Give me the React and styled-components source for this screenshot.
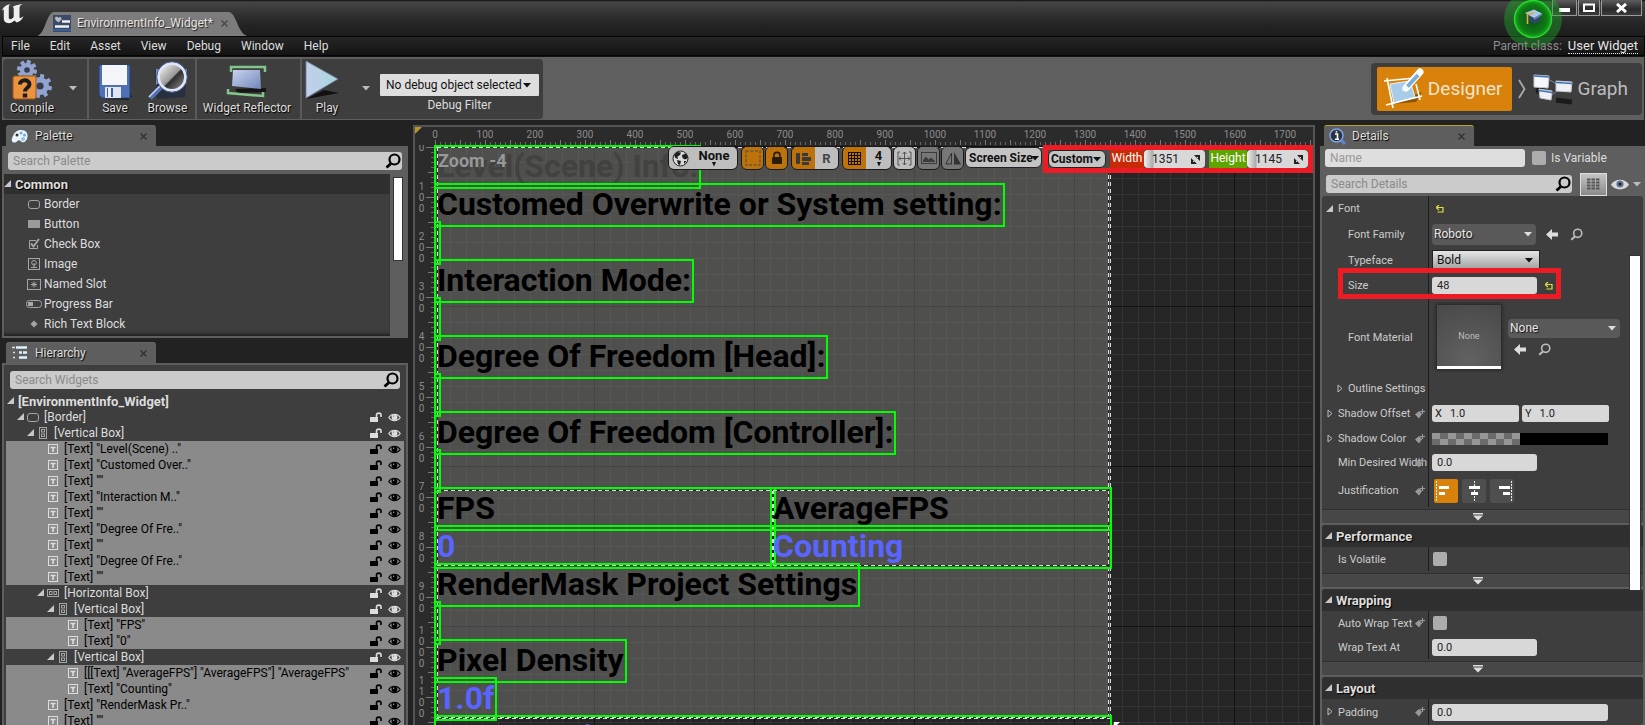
import React from "react";
import styled, { createGlobalStyle, css } from "styled-components";

const GlobalStyle = createGlobalStyle`
  * { box-sizing: border-box; }
  html, body { margin: 0; height: 100%; overflow: hidden; background: #222; }
  #root { height: 100%; }
  body, button, input, select {
    font-family: Roboto, "Liberation Sans", sans-serif;
    font-size: 12px;
    color: #ddd;
  }
  button { background: none; border: 0; padding: 0; }
  h2 { margin: 0; }
  ul { list-style: none; margin: 0; padding: 0; }
  svg { display: block; flex: none; }
`;

const RED = "#ed1c24";
const ORANGE = "#d9820b";
const GREEN = "#00ff00";

/* ---------- shell ---------- */

const Page = styled.div`
  height: 100vh;
  display: flex;
  flex-direction: column;
  overflow: hidden;
  background: #222;
`;

const TitleBar = styled.header`
  height: 36px;
  flex: none;
  display: flex;
  align-items: flex-end;
  background: linear-gradient(#0c0c0c 0, #454545 2px, #3a3a3a 9px, #262626 22px, #1c1c1c 100%);
`;

const LogoSlot = styled.div`
  width: 37px;
  height: 36px;
  padding: 3px 0 0 1px;
`;

const DocTab = styled.div`
  position: relative;
  display: flex;
  align-items: center;
  gap: 6px;
  width: 210px;
  height: 24px;
  padding: 0 0 2px 16px;
  color: #e4e4e4;
  text-shadow: 1px 1px 1px #222;
  z-index: 0;
`;

const DocTabShape = styled.svg`
  position: absolute;
  inset: 0;
  z-index: -1;
`;

const CloseButton = styled.button`
  display: flex;
  align-items: center;
  justify-content: center;
  width: 12px;
  height: 12px;
  margin-left: ${(p) => (p.$far ? "auto" : "0")};
`;

const WindowControls = styled.div`
  align-self: flex-start;
  display: flex;
  gap: 1px;
  margin: 0 3px 0 auto;
`;

const WindowButton = styled.button`
  display: flex;
  align-items: center;
  justify-content: center;
  width: ${(p) => p.$width}px;
  height: 16px;
  border: 1px solid #9a9a9a;
  border-top: 0;
  background: linear-gradient(#5d5d5d, #2b2b2b 60%, #3a3a3a);
`;

const TutorialBadge = styled.button`
  position: absolute;
  right: 82px;
  top: -10px;
  width: 60px;
  height: 60px;
`;

const MenuBar = styled.nav`
  height: 20px;
  flex: none;
  display: flex;
  align-items: center;
  margin-left: 2px;
  padding: 0 6px 0 8px;
  gap: 20px;
  border: 1px solid #050505;
  background: linear-gradient(#262626, #141414);
`;

const MenuItem = styled.button`
  line-height: 18px;
`;

const ParentClass = styled.div`
  margin-left: auto;
  color: #8d8d8d;
  display: flex;
  align-items: center;
  gap: 6px;
  z-index: 1;

  a {
    color: #e6e6e6;
    text-decoration: none;
    border-bottom: 1px dotted #e6e6e6;
    font-size: 13px;
    line-height: 14px;
  }
`;

const Toolbar = styled.div`
  height: 64px;
  flex: none;
  display: flex;
  justify-content: space-between;
  align-items: center;
  margin: 0 1px 5px 2px;
  padding: 2px 1px 2px 1px;
  border-top: 1px solid #111;
  background: #5f5f5f;
`;

const ToolGroup = styled.div`
  display: flex;
  height: 60px;
  background: #3e3e3e;
  border-radius: 4px;
`;

const ToolSection = styled.div`
  display: flex;
  align-items: stretch;
  padding: ${(p) => p.$pad || "0"};
  width: ${(p) => p.$width}px;
  border-right: ${(p) => (p.$last ? "0" : "2px solid #5a5a5a")};
`;

const ToolButton = styled.button`
  width: ${(p) => p.$width}px;
  display: flex;
  flex-direction: column;
  align-items: center;
  justify-content: flex-end;
  padding-bottom: 3px;
  text-shadow: 1px 1px 1px #000;
  line-height: 15px;
  white-space: nowrap;
`;

const ArrowButton = styled.button`
  display: flex;
  flex: 1;
  align-items: center;
  justify-content: center;
`;

const DebugFilter = styled.label`
  display: flex;
  flex-direction: column;
  align-items: center;
  gap: 2px;
  width: 159px;
  padding-top: 15px;
  line-height: 14px;
`;

const ModeSwitch = styled.div`
  display: flex;
  align-items: center;
  height: 52px;
  padding: 4px 14px 4px 6px;
  background: #3e3e3e;
  border-radius: 4px;
  margin-right: 1px;
`;

const ModeButton = styled.button`
  display: flex;
  align-items: center;
  gap: 4px;
  height: 44px;
  padding: ${(p) => (p.$active ? "0 9px 0 5px" : "0")};
  border-radius: 2px;
  font-size: 19px;
  color: ${(p) => (p.$active ? "#f1e3cd" : "#bdbdbd")};
  background: ${(p) => (p.$active ? ORANGE : "none")};
`;

const ModeArrow = styled.span`
  display: flex;
  justify-content: center;
  width: 20px;
`;

/* ---------- generic controls ---------- */

const SelectBox = styled.span`
  position: relative;
  display: block;
  width: ${(p) => (p.$width ? p.$width + "px" : "100%")};

  svg {
    position: absolute;
    right: ${(p) => p.$arrowRight || 8}px;
    top: 50%;
    margin-top: -2px;
    pointer-events: none;
  }
`;

const looks = {
  light: css`
    background: #dedede;
    color: #111;
    border-radius: 1px;
  `,
  flat: css`
    background: #595959;
    color: #e8e8e8;
    border-radius: 4px;
    text-shadow: 1px 1px 1px #111;
  `,
  raised: css`
    background: linear-gradient(#e6e6e6, #a2a2a2);
    color: #111;
    border: 1px solid #222;
  `,
  pill: css`
    background: #c4c4c4;
    color: #111;
    border: 1px solid #222;
    border-radius: 6px;
    font-weight: 700;
  `,
};

const Select = styled.select`
  appearance: none;
  display: block;
  width: 100%;
  height: ${(p) => p.$height}px;
  padding: 0 0 0 ${(p) => p.$pad}px;
  border: 0;
  outline: 0;
  ${(p) => looks[p.$look]}
`;

const SearchBox = styled.label`
  display: flex;
  align-items: center;
  flex: 1;
  height: 18px;
  padding: 0 1px 0 5px;
  background: #cbcbcb;
  border-radius: 3px;
`;

const SearchInput = styled.input`
  flex: 1;
  min-width: 0;
  border: 0;
  padding: 0;
  outline: 0;
  background: none;
  color: #111;

  &::placeholder { color: #8a8a8a; opacity: 1; }
`;

const Field = styled.input`
  width: ${(p) => p.$width}px;
  height: 17px;
  padding: 0 5px;
  border: 0;
  outline: 0;
  border-radius: 3px;
  background: #d8d8d8;
  color: #222;
  font-size: 11px;

  &::placeholder { color: #999; opacity: 1; }
`;

const Check = styled.input`
  appearance: none;
  width: 14px;
  height: 14px;
  margin: 0;
  border-radius: 2px;
  background: #adadad;
`;

/* ---------- dock ---------- */

const Workspace = styled.main`
  flex: 1;
  min-height: 0;
  display: flex;
  gap: 5px;
  padding-left: 2px;
`;

const LeftDock = styled.div`
  width: 406px;
  flex: none;
  display: flex;
  flex-direction: column;
  gap: 4px;
`;

const Panel = styled.section`
  display: flex;
  flex-direction: column;
  min-height: 0;
  min-width: 0;
  height: ${(p) => (p.$height ? p.$height + "px" : "auto")};
  flex: ${(p) => (p.$height ? "none" : 1)};
`;

const PanelTab = styled.div`
  display: flex;
  align-items: center;
  gap: 6px;
  flex: none;
  width: 150px;
  height: 21px;
  margin-left: 4px;
  padding: 0 7px 0 5px;
  background: #5e5e5e;
  border-top: 1px solid ${(p) => (p.$focused ? "#b5a52c" : "#666")};
  border-radius: 3px 3px 0 0;
  text-shadow: 1px 1px 1px #000;
`;

const PanelBody = styled.div`
  flex: 1;
  min-height: 0;
  display: flex;
  flex-direction: column;
  overflow: hidden;
  border: 2px solid #5e5e5e;
  background: ${(p) => (p.$dark ? "#3e3e3e" : "#5e5e5e")};
  border-bottom-width: ${(p) => (p.$open ? "0" : "2px")};
`;

const SearchRow = styled.div`
  display: flex;
  flex: none;
  padding: ${(p) => p.$pad};
`;

const PaletteScroll = styled.div`
  flex: 1;
  min-height: 0;
  display: flex;
`;

const PaletteList = styled.ul`
  flex: 1;
  background: #3e3e3e;
  box-shadow: inset 0 -4px 4px -3px #111;
`;

const PaletteHeader = styled.li`
  display: flex;
  align-items: center;
  gap: 4px;
  height: 20px;
  background: #2f2f2f;
  font-size: 13px;
  font-weight: 700;
  text-shadow: 1px 1px 1px #000;
`;

const PaletteItem = styled.li`
  display: flex;
  align-items: center;
  height: 20px;
  padding-left: 20px;
`;

const ScrollTrack = styled.div`
  width: 16px;
  padding: 3px 3px 0 3px;
`;

const ScrollThumb = styled.div`
  height: 84px;
  background: #fff;
  border: 1px solid #333;
`;

const IconSlot = styled.span`
  width: ${(p) => p.$width}px;
  display: flex;
  flex: none;
  align-items: center;
  justify-content: center;
`;

const Tree = styled.ul`
  flex: none;
  padding: 0 2px;
`;

const TreeRow = styled.li`
  display: flex;
  align-items: center;
  height: 16px;
  padding: 0 3px 0 ${(p) => 1 + p.$level * 10}px;
  white-space: nowrap;
  background: ${(p) => (p.$selected ? "#8a8a8a" : "none")};
  color: ${(p) => (p.$selected ? "#000" : "#ddd")};
  font-weight: ${(p) => (p.$level === 0 ? 700 : 400)};
  font-size: ${(p) => (p.$level === 0 ? 13 : 12)}px;
`;

const TreeLabel = styled.span`
  flex: 1;
  margin-left: ${(p) => (p.$root ? 4 : 2)}px;
`;

const TreeActions = styled.span`
  display: flex;
  gap: 6px;
`;

/* ---------- viewport ---------- */

const Viewport = styled.section`
  position: relative;
  flex: 1;
  min-width: 0;
  display: grid;
  grid-template: 18px 1fr / 19px 1fr;
  border: 2px solid #555;
  border-bottom: 0;
  background: #2b2b2b;
  overflow: hidden;
`;

const DockCorner = styled.svg`
  position: absolute;
  left: -2px;
  top: -2px;
`;

const TopRuler = styled.div`
  grid-column: 1 / -1;
  overflow: hidden;
  display: flex;
  padding-left: 20px;
  color: #8c8c8c;
  font-size: 10px;
  line-height: 15px;
  background:
    repeating-linear-gradient(90deg, #777 0 1px, transparent 1px 25px) 0 100% / 100% 5px no-repeat content-box,
    repeating-linear-gradient(90deg, #666 0 1px, transparent 1px 5px) 0 100% / 100% 3px no-repeat content-box;
`;

const TopMark = styled.span`
  flex: none;
  width: 50px;
  text-align: center;

  &:first-child { margin-left: -25px; }
`;

const LeftRuler = styled.div`
  overflow: hidden;
  color: #8c8c8c;
  font-size: 10px;
  line-height: 11px;
  background:
    repeating-linear-gradient(#777 0 1px, transparent 1px 50px) 100% 2px / 8px 100% no-repeat,
    repeating-linear-gradient(#777 0 1px, transparent 1px 25px) 100% 2px / 6px 100% no-repeat,
    repeating-linear-gradient(#666 0 1px, transparent 1px 5px) 100% 2px / 3px 100% no-repeat;
`;

const LeftMark = styled.span`
  display: flex;
  flex-direction: column;
  align-items: center;
  justify-content: center;
  width: 13px;
  height: 50px;

  &:first-child { margin-top: -23px; }
`;

const Canvas = styled.div`
  position: relative;
  overflow: hidden;
  background-color: #262626;
  background-image:
    linear-gradient(#121212 1px, transparent 1px),
    linear-gradient(90deg, #121212 1px, transparent 1px),
    linear-gradient(#343434 1px, transparent 1px),
    linear-gradient(90deg, #343434 1px, transparent 1px);
  background-size: 160px 160px, 160px 160px, 16px 16px, 16px 16px;
  background-position: 0 1px;
`;

const dash = "#ddd 0 4px, #222 4px 7px";
const dashedEdges = css`
  background-image:
    repeating-linear-gradient(90deg, ${dash}),
    repeating-linear-gradient(90deg, ${dash}),
    repeating-linear-gradient(${dash}),
    repeating-linear-gradient(${dash});
  background-size: 100% 1px, 100% 1px, 1px 100%, 1px 100%;
  background-position: 0 0, 0 100%, 0 0, 100% 0;
  background-repeat: no-repeat;
`;

const Artboard = styled.div`
  width: 676px;
  height: 572px;
  margin: 2px 0 0 1px;
  padding: 0 2px;
  background-color: rgba(120, 120, 116, 0.5);
  ${dashedEdges}
`;

const Stack = styled.div`
  height: 571px;
  padding-top: 1px;
  ${dashedEdges}
`;

const WidgetText = styled.div`
  width: ${(p) => (p.$fill ? "auto" : "fit-content")};
  min-width: 1px;
  height: 38px;
  line-height: 36px;
  font-size: 32px;
  font-weight: 700;
  white-space: nowrap;
  color: ${(p) => (p.$value ? "#5a64ff" : p.$dim ? "#424240" : "#000")};
  outline: 2px solid ${GREEN};
  outline-offset: 1px;
`;

const Columns = styled.div`
  display: grid;
  grid-template-columns: 1fr 1fr;
`;

const Column = styled.div`
  ${dashedEdges}
`;

const ZoomLabel = styled.div`
  position: absolute;
  left: 4px;
  top: 5px;
  font-size: 18px;
  line-height: 22px;
  font-weight: 700;
  color: #989898;
`;

const ResizeGrip = styled.svg`
  position: absolute;
  left: 679px;
  top: 577px;
`;

const ViewTools = styled.div`
  position: absolute;
  right: 0;
  top: 0;
  display: flex;
  gap: 1px;
  align-items: flex-start;
`;

const Segment = styled.div`
  display: flex;
  margin: 1px ${(p) => (p.$space ? 2 : 0)}px 0 0;
  border: 1px solid #1a1a1a;
  border-radius: 6px;
  overflow: hidden;
`;

const SegButton = styled.button`
  display: flex;
  flex-direction: column;
  align-items: center;
  justify-content: center;
  width: ${(p) => p.$width || 22}px;
  height: 22px;
  color: ${(p) => (p.$muted ? "#444" : "#111")};
  font-weight: 700;
  font-size: 13px;
  line-height: 13px;
  background: ${(p) => (p.$on ? "#bd720a" : p.$off ? "#777" : "#bebebe")};

  & + & { border-left: ${(p) => (p.$split ? "1px solid #111" : "0")}; }
`;

const ScreenSize = styled.div`
  margin-top: 2px;
`;

const SizeGroup = styled.div`
  display: flex;
  align-items: center;
  height: 28px;
  border: 5px solid ${RED};
  background: #4b4b49;
`;

const SizeLabel = styled.label`
  width: ${(p) => p.$width}px;
  height: 18px;
  margin-left: 4px;
  line-height: 17px;
  text-align: center;
  background: ${(p) => p.$tone};
  color: #fff;
`;

const SpinBox = styled.span`
  display: flex;
  align-items: center;
  width: 61px;
  height: 18px;
  padding: 0 5px 0 0;
  border-radius: 4px;
  background: linear-gradient(90deg, #f2f2f2 0, #a9a9a9 9px, #d8d8d8 10px);
`;

const SpinInput = styled.input`
  flex: 1;
  min-width: 0;
  border: 0;
  padding: 0 0 0 8px;
  outline: 0;
  background: none;
  color: #222;
`;

/* ---------- details ---------- */

const DetailsDock = styled.aside`
  position: relative;
  width: 325px;
  flex: none;
  display: flex;
`;

const NameRow = styled.div`
  display: flex;
  flex: none;
  align-items: center;
  gap: 7px;
  height: 24px;
  padding: 0 0 4px 3px;

  label { display: flex; align-items: center; gap: 5px; }
`;

const NameField = styled(Field)`
  height: 18px;
  font-size: 12px;
  background: #dedede;
`;

const FilterRow = styled.div`
  display: flex;
  flex: none;
  align-items: center;
  height: 24px;
  gap: 8px;
  padding: 0 2px 0 4px;
`;

const MatrixButton = styled.button`
  display: flex;
  align-items: center;
  justify-content: center;
  width: 27px;
  height: 23px;
  border: 1px solid #ddd;
  background: linear-gradient(#c4c4c4, #8a8a8a);
`;

const VisibilityButton = styled.button`
  display: flex;
  align-items: center;
  gap: 4px;
  margin-left: -4px;
`;

const Category = styled.div`
  flex: none;
  margin-bottom: 2px;
  background: #3e3e3e;
  border-radius: 3px;
  overflow: hidden;
`;

const CategoryHeader = styled.h2`
  display: flex;
  align-items: center;
  gap: 4px;
  height: 22px;
  padding-left: 3px;
  background: #2f2f2f;
  font-size: 13px;
  font-weight: 700;
  text-shadow: 1px 1px 1px #000;
`;

const Property = styled.div`
  display: flex;
  height: ${(p) => p.$height || 25}px;
`;

const PropertyName = styled.div`
  position: relative;
  display: flex;
  align-items: center;
  flex: none;
  width: 107px;
  padding-left: ${(p) => (p.$deep ? 13 : 3)}px;
  border-right: 1px solid #1d1d1d;
  font-size: 11px;
  white-space: nowrap;
  color: #ccc;

  label { padding-left: 4px; }
`;

const BindSlot = styled.button`
  position: absolute;
  right: 3px;
`;

const PropertyValue = styled.div`
  display: flex;
  align-items: center;
  flex: 1;
  gap: ${(p) => p.$gap || 3}px;
  padding-left: ${(p) => p.$pad || 3}px;
`;

const Expander = styled.button`
  display: flex;
  justify-content: center;
  width: 100%;
  height: 14px;
  margin-top: 2px;
  padding: 3px 10px 0 0;
  background: #474747;
  border-top: 1px solid #303030;
`;

const Highlight = styled.div`
  position: absolute;
  left: 18px;
  top: 143px;
  width: 223px;
  height: 31px;
  border: 5px solid ${RED};
  pointer-events: none;
`;

const DetailsThumb = styled.div`
  position: absolute;
  right: 4px;
  top: 130px;
  width: 12px;
  height: 336px;
  background: #fff;
  border: 1px solid #333;
`;

const Thumbnail = styled.button`
  width: 64px;
  height: 64px;
  border-bottom: 3px solid #fff;
  background: radial-gradient(circle at 50% 90%, #626262, #484848);
  box-shadow: 0 0 3px 1px #222;
  color: #bdbdbd;
  font-size: 9px;
`;

const AssetColumn = styled.div`
  display: flex;
  flex-direction: column;
  gap: 5px;
  margin-left: 4px;
`;

const AssetActions = styled.div`
  display: flex;
  gap: 12px;
  padding-left: ${(p) => p.$pad || 0}px;
`;

const VectorField = styled.label`
  display: flex;
  align-items: center;
  width: 87px;
  height: 17px;
  padding-left: 3px;
  border-radius: 3px;
  background: #d8d8d8;
  color: #222;
  font-size: 11px;
`;

const VectorInput = styled(Field)`
  flex: 1;
  min-width: 0;
  padding-left: 8px;
`;

const ColorBar = styled.button`
  display: flex;
  width: 176px;
  height: 12px;

  span { width: 50%; height: 12px; background: #000; }
  span:first-child {
    background: repeating-conic-gradient(#6b6b6b 0 25%, #969696 0 50%) 0 0 / 16px 12px;
  }
`;

const JustifyButton = styled.button`
  width: 24px;
  height: 24px;
  border-radius: 2px;
  background: ${(p) => (p.$on ? ORANGE : "#4f4f4f")};
`;

/* ---------- icons ---------- */

const Caret = ({ color = "#111", w = 8 }) => (
  <svg width={w} height="5" viewBox="0 0 8 5" preserveAspectRatio="none"><path d="M0 0H8L4 4.6Z" fill={color} /></svg>
);
const TreeArrow = ({ color = "#c8c8c8" }) => (
  <svg width="7" height="8"><path d="M7 0V7H0Z" fill={color} /></svg>
);
const OpenArrow = () => (
  <svg width="6" height="10"><path d="M1 1V8L5 4.500Z" fill="none" stroke="#bbb" /></svg>
);
const Cross = ({ color = "#2f2f2f" }) => (
  <svg width="7" height="7"><path d="M.5.500 6.500 6.500M6.500.500.500 6.500" stroke={color} strokeWidth="1.200" /></svg>
);
const Magnifier = ({ size = 16, color = "#000", sw = 2.200 }) => (
  <svg width={size} height={size} viewBox="0 0 16 16" fill="none" stroke={color} strokeWidth={sw}>
    <circle cx="9.500" cy="6.500" r="5" /><path d="M6 10.500 1.500 14.500" strokeWidth={sw * 1.300} />
  </svg>
);
const Logo = () => (
  <svg width="24" height="22" viewBox="0 0 24 22">
    <path d="M1 8C2 4 5 2 9.500 1C8 2.200 7.800 3.200 7.800 4.500V14.500C7.800 16 9 16.500 10 16C11.500 15.500 12.500 14.500 12.700 13.500V5.500C12.700 4.500 12.300 4 11.500 4C13.500 2.500 16 2 21.500 1C19 2.500 18.500 3.500 18.500 5V14C18.500 15.500 19.500 15.500 22.500 13C21 17 18.500 19 15.500 19.500L13.500 17.500C11.500 19.500 9 20.500 6.500 20C3.500 19.500 2.800 17.500 2.800 15V7.500C2.800 6 2 6.500 1 8Z" fill="#eee" />
  </svg>
);
const DocIcon = () => (
  <svg width="18" height="17">
    <rect width="18" height="17" fill="#3a4a68" /><rect y="14" width="18" height="2" fill="#35609a" />
    <path d="M2 3C3 1 5 2 5.500 3C6.500 1 9 2 8.500 4.500L5.500 7.500 2.500 5Z" fill="#b9bcc2" />
    <path d="M9 6.500H17M2 11.500H16" stroke="#eee" strokeWidth="2.500" />
  </svg>
);
const Badge = () => (
  <svg width="60" height="60">
    <defs>
      <radialGradient id="glow"><stop offset="0" stopColor="#0b4f12" /><stop offset=".75" stopColor="#0f7a16" /><stop offset="1" stopColor="#14b01c" /></radialGradient>
    </defs>
    <circle cx="30" cy="29" r="29" fill="#1cae25" opacity=".42" />
    <circle cx="30" cy="29" r="18.500" fill="url(#glow)" stroke="#2bd42f" strokeWidth="1.500" />
    <path d="M26 25V30C28 33 33 35 37 31V24Z" fill="#2f4866" />
    <path d="M22 23 31 19.500 39 23.500 31 28Z" fill="#a9c8ea" /><path d="M31 28 39 23.500V25L31 30Z" fill="#6b8db5" />
    <path d="M31 23 24.500 24.500V34" fill="none" stroke="#e0a84c" strokeWidth="1.600" />
  </svg>
);
const gearTeeth = [0, 45, 90, 135, 180, 225, 270, 315];
const Gear = ({ x, y, r }) => (
  <g transform={`translate(${x} ${y})`} fill="#92a3cf">
    {gearTeeth.map((a) => <rect key={a} x="-2" y={-r - 3} width="4" height="5" transform={`rotate(${a + 12})`} />)}
    <circle r={r} /><circle r={r * 0.400} fill="#343c4e" />
  </g>
);
const CompileIcon = () => (
  <svg width="42" height="41">
    <Gear x={16} y={10} r={7} /><Gear x={29} y={26} r={9} />
    <rect x="2" y="16" width="23" height="23" rx="2" fill="#ec9340" stroke="#9b5417" />
    <path d="M9 24.500C9 19 18.500 19 18.500 24.300C18.500 28 14 27.500 14 31.500" fill="none" stroke="#1c1c1c" strokeWidth="4" />
    <rect x="11.800" y="33.500" width="4.400" height="4" fill="#1c1c1c" />
  </svg>
);
const SaveIcon = () => (
  <svg width="38" height="38">
    <path d="M8 36 36 34 33 28V37Z" fill="#1c1c1c" />
    <path d="M3 2H34V35H6L3 32Z" fill="#4f70b5" stroke="#293f70" />
    <rect x="6" y="2" width="25" height="20" fill="#f4f5f8" />
    <rect x="9" y="24" width="16" height="11" fill="#dfe4f0" /><rect x="11" y="25" width="6" height="9" fill="#3e5fa5" /><rect x="12" y="25" width="3" height="9" fill="#e9edf6" />
  </svg>
);
const BrowseIcon = () => (
  <svg width="42" height="40">
    <defs>
      <linearGradient id="lens" x1="0" y1="0" x2="1" y2="1"><stop offset="0" stopColor="#fff" /><stop offset=".5" stopColor="#999" /><stop offset=".55" stopColor="#2e2e2e" /><stop offset="1" stopColor="#9a9a9a" /></linearGradient>
    </defs>
    <path d="M8 8H40L38 36 10 38Z" fill="#28303f" /><path d="M9 8H16V18L9 24ZM36 8H40L39 24Z" fill="#7990c8" />
    <path d="M3 37 14 26" stroke="#5470b0" strokeWidth="5" /><path d="M2 36 13 25" stroke="#c8d4f0" strokeWidth="1.500" />
    <circle cx="25" cy="16" r="13.500" fill="url(#lens)" stroke="#dfe6f6" strokeWidth="3" /><circle cx="25" cy="16" r="15.300" fill="none" stroke="#4a5f94" />
  </svg>
);
const ReflectorIcon = () => (
  <svg width="42" height="36">
    <defs><linearGradient id="refl" x1="0" y1="0" x2="1" y2="1"><stop offset="0" stopColor="#c9d4ef" /><stop offset="1" stopColor="#7186b8" /></linearGradient></defs>
    <path d="M9 24 40 23V27L12 28Z" fill="#151515" />
    <path d="M5 7V2H39V7M2 24V28L37 31V27" fill="none" stroke="#84c48b" strokeWidth="2.500" />
    <path d="M7 5H34L35 24 6 21Z" fill="url(#refl)" />
  </svg>
);
const PlayIcon = () => (
  <svg width="44" height="41">
    <defs><linearGradient id="play" x1="0" y1="0" x2="1" y2="0"><stop offset="0" stopColor="#c3cfe9" /><stop offset="1" stopColor="#a9d5df" /></linearGradient></defs>
    <path d="M1 39 19 30 34 33Z" fill="#111" /><path d="M1 1 33 19 1 38Z" fill="url(#play)" stroke="#6f7da0" strokeWidth=".8" />
  </svg>
);
const DesignerIcon = () => (
  <svg width="42" height="42">
    <path d="M8 36 40 24 34 34Z" fill="#8a5406" />
    <path d="M8 16 28 13 33 29 12 35Z" fill="#a8cbe8" stroke="#e8f2fa" />
    <path d="M2 13 33 10M5 10 11 40M4 37 40 28M34 16 38 32" stroke="#fff" strokeWidth="1.600" />
    <path d="M38 4 24 20" stroke="#fff" strokeWidth="7" strokeLinecap="round" /><path d="M36 7 25 19" stroke="#79aede" strokeWidth="4" /><path d="M20 23 28 21 23 16Z" fill="#f4faff" />
  </svg>
);
const GraphIcon = () => (
  <svg width="42" height="32">
    <path d="M4 18 14 16M24 27 40 29" stroke="#1b1b1b" strokeWidth="5" />
    <path d="M16 6 26 12M18 24 27 16" stroke="#6c8aa8" />
    <g stroke="#c4c8ce"><path d="M2 2 17 3 16 15 2 14Z" fill="#f6f7fa" /><path d="M24 8 40 9 39 19 24 18Z" fill="#eef0f5" /><path d="M7 16 20 18 19 27 8 25Z" fill="#eef0f5" /></g>
    <path d="M2 3 17 4M24 9.500 40 10.500M7 17.500 20 19.500" stroke="#3f6fc0" strokeWidth="1.500" />
  </svg>
);
const PaletteIcon = () => (
  <svg width="18" height="15"><path d="M10 1C15 1 17 4 16.500 8C16 12 13 14 11 13C9.500 12 8.500 10.500 7 11.500C5.500 13 3.500 14.500 1.500 13C0 11 1 9 2 7C3.500 3.500 6 1 10 1Z" fill="#eaf5fc" /><circle cx="6" cy="6" r="1.500" fill="#333" /><circle cx="10" cy="4" r="1.500" fill="#73a9d8" /><circle cx="13.500" cy="6" r="1.500" fill="#73a9d8" /><circle cx="12" cy="10" r="2" fill="#8cc4ea" /></svg>
);
const HierarchyIcon = () => (
  <svg width="18" height="14"><path d="M1 1.500H4M2 6.500H4M2 11.500H4" stroke="#cfe4f0" strokeWidth="1.500" /><path d="M5 1.500H16M8 6.500H11M12 6.500H16M8 11.500H16" stroke="#dff1fa" strokeWidth="2.500" /></svg>
);
const InfoIcon = () => (
  <svg width="17" height="17"><path d="M11 11 16 16" stroke="#5b86d8" strokeWidth="3" /><circle cx="7.500" cy="7.500" r="6.500" fill="#2c3340" stroke="#7ba0e6" strokeWidth="1.500" /><path d="M6 6H8.500V11M6 11.200H10M7.500 3V4.500" stroke="#fff" strokeWidth="1.600" fill="none" /></svg>
);
const outline = { fill: "none", stroke: "#a5a5a5" };
const BorderIcon = () => <svg width="12" height="9" {...outline}><rect x=".5" y=".5" width="11" height="8" rx="2.500" /></svg>;
const ButtonIcon = () => <svg width="12" height="8"><rect width="12" height="8" fill="#9a9a9a" /></svg>;
const CheckIcon = () => <svg width="12" height="12" {...outline}><path d="M8 2.500H1.500V10.500H9.500V7" /><path d="M3 5.500 5.500 8.500 11 1" strokeWidth="2" /></svg>;
const ImageIcon = () => <svg width="12" height="12" {...outline}><rect x=".5" y=".5" width="11" height="11" /><circle cx="6" cy="4.800" r="2.300" /><path d="M6 5V9M3 9.500H9" /></svg>;
const SlotIcon = () => <svg width="14" height="11" {...outline}><rect x=".5" y=".5" width="13" height="10" /><path d="M7 2.500V8.500M4 5.500H10M5 3.500 9 7.500M9 3.500 5 7.500" /></svg>;
const ProgressIcon = () => <svg width="16" height="8" {...outline}><rect x=".5" y=".5" width="15" height="7" rx="3" /><rect x="2" y="2" width="5" height="4" fill="#aaa" stroke="none" /></svg>;
const DotIcon = () => <svg width="8" height="8"><path d="M4 .500 7.500 4 4 7.500.500 4Z" fill="#a5a5a5" /></svg>;
const VBoxIcon = () => <svg width="8" height="12" {...outline}><rect x=".5" y=".5" width="7" height="11" /><rect x="2.500" y="2.500" width="3" height="2.500" /><rect x="2.500" y="7" width="3" height="2.500" /></svg>;
const HBoxIcon = () => <svg width="12" height="8" {...outline}><rect x=".5" y=".5" width="11" height="7" /><rect x="2.500" y="2.500" width="2.500" height="3" /><rect x="7" y="2.500" width="2.500" height="3" /></svg>;
const TextIcon = () => <svg width="10" height="10"><rect x=".5" y=".5" width="9" height="9" fill="none" stroke="#ddd" /><path d="M2.500 3.500H7.500M5 3V8" stroke="#ddd" strokeWidth="1.600" /></svg>;
const LockIcon = ({ color }) => <svg width="12" height="11"><rect y="5" width="8" height="5" fill={color} /><path d="M6.500 5V3C6.500 .500 11 .500 11 3V5" fill="none" stroke={color} strokeWidth="1.600" /></svg>;
const EyeIcon = ({ color }) => <svg width="13" height="9"><path d="M.7 4.500C3.500 .200 9.500 .200 12.300 4.500C9.500 8.800 3.500 8.800 .7 4.500Z" fill="none" stroke={color} strokeWidth="1.100" /><circle cx="6.500" cy="4.200" r="2.900" fill={color} /><circle cx="5.600" cy="3.300" r=".8" fill="#999" /></svg>;
const BigEyeIcon = () => <svg width="18" height="11"><path d="M0 5.500C4 -1 14 -1 18 5.500C14 12 4 12 0 5.500Z" fill="#dadada" /><circle cx="9" cy="5" r="3.600" fill="#5d7796" /><circle cx="9" cy="5" r="1.600" fill="#222" /></svg>;
const GlobeIcon = () => <svg width="17" height="17"><circle cx="8.500" cy="8.500" r="7.500" fill="#d8d8d8" stroke="#222" /><path d="M2 5 5 2 9 2.500 8 5 5.500 6.500 6 9 3.500 8ZM10 5 14 3.500 16 8 13 9.500 10.500 8ZM5 10 9 11 8 15 6 14ZM12 11 14.500 11 12 14Z" fill="#1d1d1d" /></svg>;
const MarqueeIcon = () => <svg width="16" height="16"><rect x="1" y="1" width="14" height="14" fill="none" stroke="#6b5a40" strokeWidth="1.500" strokeDasharray="3 1.500" /></svg>;
const PadlockIcon = () => <svg width="10" height="14"><rect y="6" width="10" height="7" rx="1" fill="#2a1c08" /><path d="M2 6V4C2 .500 8 .500 8 4V6" fill="none" stroke="#2a1c08" strokeWidth="1.600" /></svg>;
const FlowIcon = () => <svg width="15" height="13" fill="#3a3a3a"><rect y="1" width="4" height="11" rx="1" /><path d="M6 1H12V4H6ZM6 5H15V9H6ZM6 10H13V13H6Z" /></svg>;
const GridIcon = () => <svg width="13" height="13"><path d="M.5 0V13M3.500 0V13M6.500 0V13M9.500 0V13M12.500 0V13M0 .500H13M0 3.500H13M0 6.500H13M0 9.500H13M0 12.500H13" stroke="#17100a" /></svg>;
const FitIcon = () => <svg width="15" height="15" fill="none" stroke="#555"><path d="M3 1H1V14H3M12 1H14V14H12M7.500 1V14M2 7.500H13M5.500 3 7.500 1 9.500 3M5.500 12 7.500 14 9.500 12M4 5.500 2 7.500 4 9.500M11 5.500 13 7.500 11 9.500" /></svg>;
const PictureIcon = () => <svg width="16" height="12"><rect x=".5" y=".5" width="15" height="11" fill="none" stroke="#3c3c3c" /><path d="M2 10V8L5 4.500 7.500 7.500 10 5.500 14 9V10Z" fill="#3c3c3c" /></svg>;
const FlipIcon = () => <svg width="16" height="13"><path d="M6.500 1V12H.800Z" fill="none" stroke="#333" /><path d="M9 0V12.500H16Z" fill="#333" /></svg>;
const SpinIcon = () => <svg width="9" height="9" fill="#222"><path d="M3 0H9V6ZM0 3V9H6Z" /><path d="M2 7 7 2" stroke="#d8d8d8" /></svg>;
const ResetIcon = () => <svg width="8" height="8"><path d="M3 0 0 2.500 3 5M1 2.500H7V7H1.500" fill="none" stroke="#e2e03a" strokeWidth="1.200" /></svg>;
const BackIcon = () => <svg width="12" height="11"><path d="M0 5.500 6 0V3.500H12V7.500H6V11Z" fill="#ddd" /></svg>;
const BindIcon = () => <svg width="10" height="10"><path d="M0 5.500 4 2 7 5 4 9.500Z" fill="#999" /><path d="M7.500 0V5M5 2.500H10" stroke="#999" strokeWidth="1.200" /></svg>;
const MoreIcon = () => <svg width="10" height="8"><path d="M0 .700H10" stroke="#ddd" strokeWidth="1.400" /><path d="M0 2.500H10L5 7.500Z" fill="#ddd" /></svg>;
const MatrixIcon = () => <svg width="13" height="13"><path d="M0 1.500H13M0 4.500H13M0 7.500H13M0 10.500H13" stroke="#555" strokeWidth="2" strokeDasharray="3.500 1" /></svg>;
const JUSTIFY = {
  Left: "M5 7H15V10H5ZM5 13H11V16H5Z",
  Center: "M7 7H18V10H7ZM9 13H16V16H9Z",
  Right: "M9 7H20V10H9ZM13 13H20V16H13Z",
};
const JustifyIcon = ({ side }) => {
  const x = { Left: 2.500, Center: 12.500, Right: 21.500 }[side];
  return <svg width="24" height="24"><path d={`M${x} 2V22`} stroke="#eee" strokeDasharray="2 1" /><path d={JUSTIFY[side]} fill="#fff" /></svg>;
};

/* ---------- data ---------- */

const palette = [
  ["Border", BorderIcon], ["Button", ButtonIcon], ["Check Box", CheckIcon], ["Image", ImageIcon],
  ["Named Slot", SlotIcon], ["Progress Bar", ProgressIcon], ["Rich Text Block", DotIcon],
];

const tree = [
  [0, "[EnvironmentInfo_Widget]", null],
  [1, "[Border]", BorderIcon],
  [2, "[Vertical Box]", VBoxIcon],
  [3, '[Text] "Level(Scene) .."'],
  [3, '[Text] "Customed Over.."'],
  [3, '[Text] ""'],
  [3, '[Text] "Interaction M.."'],
  [3, '[Text] ""'],
  [3, '[Text] "Degree Of Fre.."'],
  [3, '[Text] ""'],
  [3, '[Text] "Degree Of Fre.."'],
  [3, '[Text] ""'],
  [3, "[Horizontal Box]", HBoxIcon],
  [4, "[Vertical Box]", VBoxIcon],
  [5, '[Text] "FPS"'],
  [5, '[Text] "0"'],
  [4, "[Vertical Box]", VBoxIcon],
  [5, '[[[Text] "AverageFPS"] "AverageFPS"] "AverageFPS"'],
  [5, '[Text] "Counting"'],
  [3, '[Text] "RenderMask Pr.."'],
  [3, '[Text] ""'],
];

const topMarks = Array.from({ length: 18 }, (_, i) => i * 100);
const leftMarks = Array.from({ length: 12 }, (_, i) => i * 100);

/* ---------- pieces ---------- */

const Dropdown = ({ label, width, height, look, pad = 6, arrow = "#111", arrowRight }) => (
  <SelectBox $width={width} $arrowRight={arrowRight}>
    <Select aria-label={label} $height={height} $look={look} $pad={pad}>
      <option>{label}</option>
    </Select>
    <Caret color={arrow} />
  </SelectBox>
);

const Search = ({ label }) => (
  <SearchBox>
    <SearchInput placeholder={label} aria-label={label} />
    <Magnifier />
  </SearchBox>
);

const Tab = ({ icon, title, focused }) => (
  <PanelTab $focused={focused}>
    {icon}
    {title}
    <CloseButton $far aria-label={`Close ${title}`}><Cross /></CloseButton>
  </PanelTab>
);

const Prop = ({ id, name, deep, open, bind, height, gap, pad, children }) => (
  <Property $height={height}>
    <PropertyName $deep={deep}>
      <IconSlot $width={9}>{open}</IconSlot>
      <label htmlFor={id}>{name}</label>
      {bind && <BindSlot aria-label={`Bind ${name}`}><BindIcon /></BindSlot>}
    </PropertyName>
    <PropertyValue $gap={gap} $pad={pad}>{children}</PropertyValue>
  </Property>
);

const More = () => <Expander aria-label="Show advanced"><MoreIcon /></Expander>;

const AssetButtons = ({ pad }) => (
  <AssetActions $pad={pad}>
    <button aria-label="Use selected asset"><BackIcon /></button>
    <button aria-label="Find asset"><Magnifier size={13} color="#bbb" sw={2} /></button>
  </AssetActions>
);

function Header() {
  return (
    <>
      <TitleBar>
        <LogoSlot><Logo /></LogoSlot>
        <DocTab>
          <DocTabShape width="210" height="24">
            <path d="M0 24C8 22 9 3 16 0H192C200 2 200 20 210 24Z" fill="#7c7c7c" />
          </DocTabShape>
          <DocIcon />
          EnvironmentInfo_Widget*
          <CloseButton aria-label="Close document"><Cross color="#444" /></CloseButton>
        </DocTab>
        <WindowControls>
          <WindowButton $width={25} aria-label="Minimize"><svg width="11" height="8"><rect y="4" width="11" height="4" fill="#fff" /></svg></WindowButton>
          <WindowButton $width={22} aria-label="Restore"><svg width="12" height="9"><rect x="1" y="1.500" width="10" height="6.500" fill="none" stroke="#fff" strokeWidth="2" /></svg></WindowButton>
          <WindowButton $width={41} aria-label="Close"><svg width="11" height="10"><path d="M1 1 10 9M10 1 1 9" stroke="#fff" strokeWidth="3" /></svg></WindowButton>
        </WindowControls>
      </TitleBar>
      <TutorialBadge aria-label="Tutorials"><Badge /></TutorialBadge>
      <MenuBar>
        {["File", "Edit", "Asset", "View", "Debug", "Window", "Help"].map((m) => <MenuItem key={m}>{m}</MenuItem>)}
        <ParentClass>Parent class: <a href="#user-widget">User Widget</a></ParentClass>
      </MenuBar>
    </>
  );
}

function MainToolbar() {
  return (
    <Toolbar>
      <ToolGroup>
        <ToolSection $width={86} $pad="0 0 0 3px">
          <ToolButton $width={52}><CompileIcon />Compile</ToolButton>
          <ArrowButton aria-label="Compile options"><Caret color="#bbb" /></ArrowButton>
        </ToolSection>
        <ToolSection $width={108}>
          <ToolButton $width={52}><SaveIcon />Save</ToolButton>
          <ToolButton $width={53}><BrowseIcon />Browse</ToolButton>
        </ToolSection>
        <ToolSection $width={105}>
          <ToolButton $width={100}><ReflectorIcon />Widget Reflector</ToolButton>
        </ToolSection>
        <ToolSection $width={241} $last $pad="0 4px 0 0">
          <ToolButton $width={50}><PlayIcon />Play</ToolButton>
          <ArrowButton aria-label="Play options"><Caret color="#bbb" /></ArrowButton>
          <DebugFilter>
            <Dropdown label="No debug object selected" height={22} look="light" />
            Debug Filter
          </DebugFilter>
        </ToolSection>
      </ToolGroup>
      <ModeSwitch>
        <ModeButton $active><DesignerIcon />Designer</ModeButton>
        <ModeArrow><svg width="8" height="20"><path d="M1 1 6.500 10 1 19" fill="none" stroke="#aaa" strokeWidth="1.800" /></svg></ModeArrow>
        <ModeButton><GraphIcon />Graph</ModeButton>
      </ModeSwitch>
    </Toolbar>
  );
}

function PalettePanel() {
  return (
    <Panel $height={213}>
      <Tab icon={<PaletteIcon />} title="Palette" />
      <PanelBody>
        <SearchRow $pad="4px 4px 4px 4px"><Search label="Search Palette" /></SearchRow>
        <PaletteScroll>
          <PaletteList>
            <PaletteHeader><TreeArrow />Common</PaletteHeader>
            {palette.map(([name, Icon]) => (
              <PaletteItem key={name}><IconSlot $width={20}><Icon /></IconSlot>{name}</PaletteItem>
            ))}
          </PaletteList>
          <ScrollTrack><ScrollThumb /></ScrollTrack>
        </PaletteScroll>
      </PanelBody>
    </Panel>
  );
}

function HierarchyPanel() {
  return (
    <Panel>
      <Tab icon={<HierarchyIcon />} title="Hierarchy" />
      <PanelBody $dark $open>
        <SearchRow $pad="6px 6px 4px 6px"><Search label="Search Widgets" /></SearchRow>
        <Tree>
          {tree.map(([level, name, Icon], i) => {
            const selected = Icon === undefined;
            const tone = selected ? "#000" : "#ddd";
            const RowIcon = Icon || TextIcon;
            return (
              <TreeRow key={i} $level={level} $selected={selected}>
                <IconSlot $width={7}>{!selected && <TreeArrow />}</IconSlot>
                {level > 0 && <IconSlot $width={18}><RowIcon /></IconSlot>}
                <TreeLabel $root={level === 0}>{name}</TreeLabel>
                {level > 0 && (
                  <TreeActions>
                    <button aria-label="Lock"><LockIcon color={tone} /></button>
                    <button aria-label="Visible"><EyeIcon color={tone} /></button>
                  </TreeActions>
                )}
              </TreeRow>
            );
          })}
        </Tree>
      </PanelBody>
    </Panel>
  );
}

function Designer() {
  return (
    <Viewport>
      <TopRuler>{topMarks.map((m) => <TopMark key={m}>{m}</TopMark>)}</TopRuler>
      <LeftRuler>
        {leftMarks.map((m) => (
          <LeftMark key={m}>{String(m).split("").map((d, i) => <span key={i}>{d}</span>)}</LeftMark>
        ))}
      </LeftRuler>
      <Canvas>
        <Artboard>
          <Stack>
            <WidgetText $dim>Level(Scene) Info:</WidgetText>
            <WidgetText>Customed Overwrite or System setting:</WidgetText>
            <WidgetText />
            <WidgetText>Interaction Mode:</WidgetText>
            <WidgetText />
            <WidgetText>Degree Of Freedom [Head]:</WidgetText>
            <WidgetText />
            <WidgetText>Degree Of Freedom [Controller]:</WidgetText>
            <WidgetText />
            <Columns>
              <Column>
                <WidgetText $fill>FPS</WidgetText>
                <WidgetText $fill $value>0</WidgetText>
              </Column>
              <Column>
                <WidgetText $fill>AverageFPS</WidgetText>
                <WidgetText $fill $value>Counting</WidgetText>
              </Column>
            </Columns>
            <WidgetText>RenderMask Project Settings</WidgetText>
            <WidgetText />
            <WidgetText>Pixel Density</WidgetText>
            <WidgetText $value>1.0f</WidgetText>
            <WidgetText $fill $value>Compression</WidgetText>
          </Stack>
        </Artboard>
        <ZoomLabel>Zoom -4</ZoomLabel>
        <ResizeGrip width="8" height="8"><path d="M1 0H7L0 7Z" fill="#fff" /></ResizeGrip>
        <ViewTools>
          <Segment $space>
            <SegButton aria-label="Localization"><GlobeIcon /></SegButton>
            <SegButton $width={46} $split>None<Caret w={4} /></SegButton>
          </Segment>
          <Segment><SegButton $on $width={21} aria-label="Outlines"><MarqueeIcon /></SegButton></Segment>
          <Segment $space><SegButton $on $width={21} aria-label="Respect locks"><PadlockIcon /></SegButton></Segment>
          <Segment $space>
            <SegButton $on $width={23} aria-label="Flow direction"><FlowIcon /></SegButton>
            <SegButton $width={23} $muted>R</SegButton>
          </Segment>
          <Segment>
            <SegButton $on $width={23} aria-label="Grid snap"><GridIcon /></SegButton>
            <SegButton $width={25} $split>4<Caret w={4} /></SegButton>
          </Segment>
          <Segment><SegButton $width={21} aria-label="Zoom to fit"><FitIcon /></SegButton></Segment>
          <Segment><SegButton $off $width={21} aria-label="Background image"><PictureIcon /></SegButton></Segment>
          <Segment><SegButton $off $width={21} aria-label="Mirror"><FlipIcon /></SegButton></Segment>
          <ScreenSize><Dropdown label="Screen Size" width={77} height={21} look="pill" pad={3} arrowRight={3} /></ScreenSize>
          <SizeGroup>
            <Dropdown label="Custom" width={58} height={18} look="pill" pad={2} arrowRight={5} />
            <SizeLabel htmlFor="canvas-width" $width={34} $tone="#c92a06">Width</SizeLabel>
            <SpinBox><SpinInput id="canvas-width" defaultValue="1351" /><SpinIcon /></SpinBox>
            <SizeLabel htmlFor="canvas-height" $width={38} $tone="#5fa500">Height</SizeLabel>
            <SpinBox><SpinInput id="canvas-height" defaultValue="1145" /><SpinIcon /></SpinBox>
          </SizeGroup>
        </ViewTools>
      </Canvas>
      <DockCorner width="11" height="11"><path d="M0 0H11L0 11Z" fill="#b9962d" /></DockCorner>
    </Viewport>
  );
}

function Details() {
  return (
    <DetailsDock>
      <Panel>
        <Tab icon={<InfoIcon />} title="Details" focused />
        <PanelBody $open>
          <NameRow>
            <NameField $width={200} placeholder="Name" aria-label="Name" />
            <label><Check type="checkbox" />Is Variable</label>
          </NameRow>
          <FilterRow>
            <Search label="Search Details" />
            <MatrixButton aria-label="Property matrix"><MatrixIcon /></MatrixButton>
            <VisibilityButton aria-label="View options"><BigEyeIcon /><Caret color="#bbb" /></VisibilityButton>
          </FilterRow>
          <Category>
            <Prop name="Font" open={<TreeArrow />} pad={7}>
              <button aria-label="Reset font"><ResetIcon /></button>
            </Prop>
            <Prop name="Font Family" deep height={26} gap={10}>
              <Dropdown label="Roboto" width={104} height={21} look="flat" pad={2} arrow="#ddd" arrowRight={4} />
              <AssetButtons />
            </Prop>
            <Prop name="Typeface" deep height={26}>
              <Dropdown label="Bold" width={108} height={20} look="raised" pad={4} arrowRight={7} />
            </Prop>
            <Prop id="size" name="Size" deep gap={8}>
              <Field id="size" $width={105} defaultValue="48" />
              <button aria-label="Reset size"><ResetIcon /></button>
            </Prop>
            <Prop name="Font Material" deep height={78} pad={8}>
              <Thumbnail>None</Thumbnail>
              <AssetColumn>
                <Dropdown label="None" width={112} height={19} look="flat" pad={2} arrow="#ddd" arrowRight={4} />
                <AssetButtons pad={6} />
              </AssetColumn>
            </Prop>
            <Prop name="Outline Settings" deep open={<OpenArrow />} />
            <Prop id="shadow-x" name="Shadow Offset" open={<OpenArrow />} bind>
              <VectorField>X<VectorInput id="shadow-x" defaultValue="1.0" /></VectorField>
              <VectorField>Y<VectorInput defaultValue="1.0" /></VectorField>
            </Prop>
            <Prop name="Shadow Color" open={<OpenArrow />} bind>
              <ColorBar aria-label="Shadow color"><span /><span /></ColorBar>
            </Prop>
            <Prop id="min-width" name="Min Desired Width" bind height={23}>
              <Field id="min-width" $width={105} defaultValue="0.0" />
            </Prop>
            <Prop name="Justification" bind height={33} gap={4} pad={5}>
              {["Left", "Center", "Right"].map((s) => (
                <JustifyButton key={s} $on={s === "Left"} aria-label={s}><JustifyIcon side={s} /></JustifyButton>
              ))}
            </Prop>
            <More />
          </Category>
          <Category>
            <CategoryHeader><TreeArrow />Performance</CategoryHeader>
            <Prop id="volatile" name="Is Volatile" pad={4} height={24}><Check id="volatile" type="checkbox" /></Prop>
            <More />
          </Category>
          <Category>
            <CategoryHeader><TreeArrow />Wrapping</CategoryHeader>
            <Prop id="auto-wrap" name="Auto Wrap Text" bind pad={4} height={24}><Check id="auto-wrap" type="checkbox" /></Prop>
            <Prop id="wrap-at" name="Wrap Text At" height={24}><Field id="wrap-at" $width={105} defaultValue="0.0" /></Prop>
            <More />
          </Category>
          <Category>
            <CategoryHeader><TreeArrow />Layout</CategoryHeader>
            <Prop id="padding" name="Padding" open={<OpenArrow />} bind height={26}>
              <Field id="padding" $width={176} defaultValue="0.0" />
            </Prop>
          </Category>
        </PanelBody>
      </Panel>
      <DetailsThumb />
      <Highlight />
    </DetailsDock>
  );
}

export default function App() {
  return (
    <Page>
      <GlobalStyle />
      <Header />
      <MainToolbar />
      <Workspace>
        <LeftDock>
          <PalettePanel />
          <HierarchyPanel />
        </LeftDock>
        <Designer />
        <Details />
      </Workspace>
    </Page>
  );
}
